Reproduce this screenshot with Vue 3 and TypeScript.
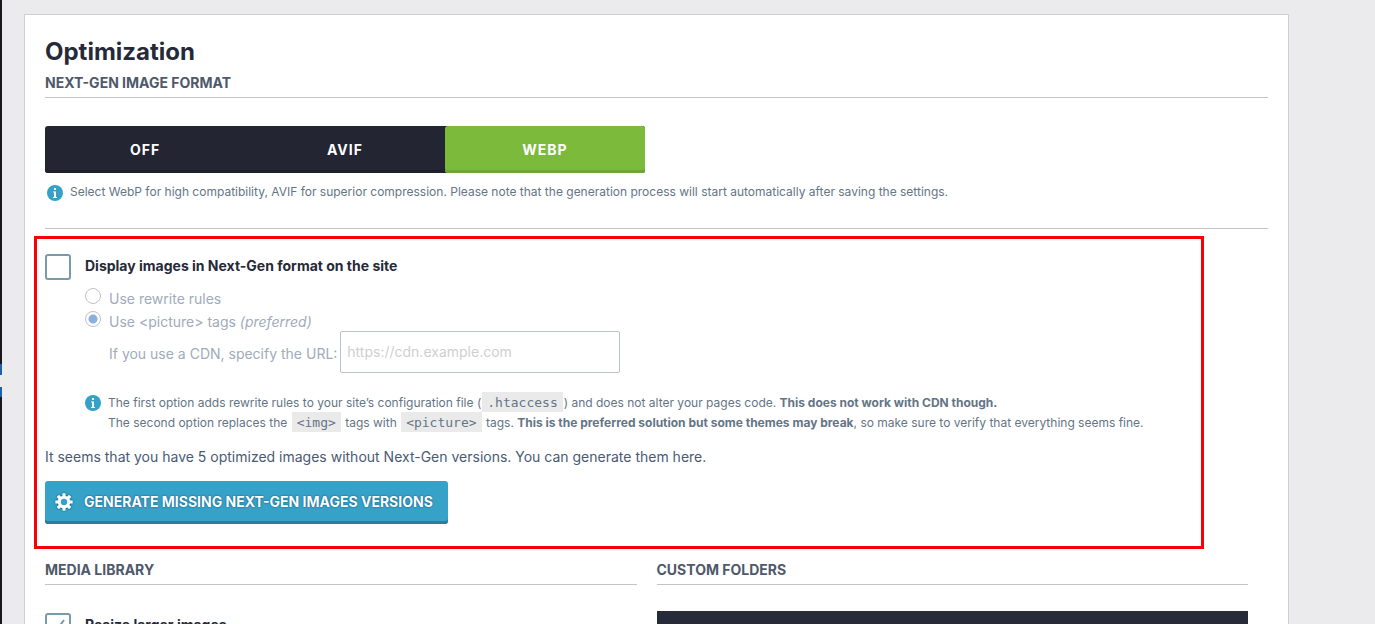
<script setup lang="ts">
import { ref } from 'vue'

const formats = ['Off', 'AVIF', 'WebP']
const format = ref('WebP')
const displayNextGen = ref(false)
const method = ref('picture')
const cdnUrl = ref('')
const resize = ref(true)
</script>

<template>
  <div class="page">
    <nav class="rail" aria-label="Admin menu">
      <a class="rail-current" href="#" aria-label="Settings"></a>
    </nav>
    <main class="card">
      <h1>Optimization</h1>

      <section>
        <h2>Next-Gen image format</h2>
        <div class="formats" role="radiogroup" aria-label="Next-Gen image format">
          <label v-for="name in formats" :key="name" class="format" :class="{ on: format === name }">
            <input v-model="format" type="radio" name="format" :value="name" />
            <span>{{ name }}</span>
          </label>
        </div>
        <div class="info format-info">
          <svg class="info-icon" viewBox="0 0 16 16" aria-hidden="true">
            <circle cx="8" cy="8" r="8" fill="#33a2c6" />
            <path d="M7 3h2v2H7zM6 6.500h3V12h1v1H6v-1h1V7.500H6z" fill="#fff" />
          </svg>
          <p>Select WebP for high compatibility, AVIF for superior compression. Please note that the generation process will start automatically after saving the settings.</p>
        </div>
      </section>

      <section class="delivery">
        <div class="check-row">
          <input id="nextgen" v-model="displayNextGen" class="check" type="checkbox" />
          <label for="nextgen">Display images in Next-Gen format on the site</label>
        </div>

        <div class="options">
          <label class="option">
            <input v-model="method" type="radio" name="method" value="rewrite" />
            <span>Use rewrite rules</span>
          </label>
          <label class="option">
            <input v-model="method" type="radio" name="method" value="picture" />
            <span>Use &lt;picture&gt; tags <em>(preferred)</em></span>
          </label>
          <div class="cdn">
            <label for="cdn">If you use a CDN, specify the URL:</label>
            <input id="cdn" v-model="cdnUrl" type="url" placeholder="https://cdn.example.com" />
          </div>
          <div class="info">
            <svg class="info-icon" viewBox="0 0 16 16" aria-hidden="true">
              <circle cx="8" cy="8" r="8" fill="#33a2c6" />
              <path d="M7 3h2v2H7zM6 6.500h3V12h1v1H6v-1h1V7.500H6z" fill="#fff" />
            </svg>
            <p>
              The first option adds rewrite rules to your site’s configuration file (<code>.htaccess</code>) and does not alter your pages code. <strong>This does not work with CDN though.</strong><br />
              The second option replaces the <code>&lt;img&gt;</code> tags with <code>&lt;picture&gt;</code> tags. <strong>This is the preferred solution but some themes may break</strong>, so make sure to verify that everything seems fine.
            </p>
          </div>
        </div>

        <p class="missing">It seems that you have 5 optimized images without Next-Gen versions. You can generate them here.</p>
        <button class="generate" type="button">
          <svg viewBox="0 0 18 18" aria-hidden="true">
            <g fill="#fff">
              <rect v-for="n in 4" :key="n" x="7.400" y="0.300" width="3.200" height="17.400" rx="0.600" :transform="`rotate(${n * 45} 9 9)`" />
              <circle cx="9" cy="9" r="6.300" />
            </g>
            <circle cx="9" cy="9" r="3.200" fill="#37a2c7" />
          </svg>
          <span>Generate missing Next-Gen images versions</span>
        </button>
        <div class="highlight"></div>
      </section>

      <div class="columns">
        <section>
          <h2>Media library</h2>
          <div class="check-row">
            <input id="resize" v-model="resize" class="check" type="checkbox" />
            <label for="resize">Resize larger images</label>
          </div>
        </section>
        <section>
          <h2>Custom folders</h2>
          <div class="folders"></div>
        </section>
      </div>
    </main>
  </div>
</template>

<style>
body {
  margin: 0;
  background: #ebebed;
}
</style>

<style scoped>
.page {
  display: flex;
  height: 100vh;
  overflow: hidden;
  box-sizing: border-box;
  background: #ebebed;
  font-family: Inter, "Liberation Sans", sans-serif;
  font-size: 14px;
  line-height: 20px;
  color: #4a5a75;
}

.rail {
  flex: none;
  width: 2px;
  padding-top: 364px;
  background: #15181d;
}

.rail-current {
  display: block;
  height: 33px;
  background: linear-gradient(#1f5fae 11px, #ebebed 11px 23px, #1f5fae 23px);
}

.card {
  flex: 1;
  align-self: flex-start;
  margin: 14px 86px 0 22px;
  padding: 20px;
  border: 1px solid #cfcfd3;
  background: #fff;
}

h1 {
  margin: 0 0 4px;
  font-size: 24px;
  line-height: 34px;
  font-weight: 700;
  color: #262a38;
}

h2 {
  margin: 0;
  padding-bottom: 4px;
  border-bottom: 1px solid #c3c4c7;
  font-size: 14px;
  line-height: 20px;
  font-weight: 700;
  text-transform: uppercase;
  color: #4f5969;
}

p {
  margin: 0;
}

.formats {
  display: flex;
  width: 600px;
  margin-top: 28px;
  border-radius: 3px;
  background: #242533;
  box-shadow: inset 0 -3px #1f202d;
}

.format {
  position: relative;
  flex: 1;
  height: 47px;
  border-radius: 3px;
  line-height: 48px;
  text-align: center;
  text-transform: uppercase;
  font-weight: 700;
  letter-spacing: 1px;
  color: #fff;
}

.format input {
  position: absolute;
  inset: 0;
  margin: 0;
  opacity: 0;
}

.format.on {
  background: #7cba3c;
  box-shadow: inset 0 -3px #6fa735;
}

.info {
  display: flex;
  gap: 7px;
  font-size: 12px;
  color: #647585;
}

.info-icon {
  flex: none;
  width: 16px;
  height: 16px;
  margin-top: 2px;
}

.format-info {
  padding: 9px 2px 26px;
  border-bottom: 1px solid #c3c4c7;
}

.format-info .info-icon {
  margin-top: 3px;
}

.delivery {
  position: relative;
  padding: 25px 0 36px;
}

.highlight {
  position: absolute;
  inset: 7px 64px 11px -11px;
  border: 3px solid #f80008;
  pointer-events: none;
}

.check-row {
  display: flex;
  gap: 14px;
  font-weight: 700;
  line-height: 24px;
  color: #262a38;
}

.check {
  appearance: none;
  flex: none;
  width: 26px;
  height: 26px;
  margin: 0;
  border: 2px solid #7a99ab;
  border-radius: 3px;
  background: #fff;
}

.check:checked {
  background: url("data:image/svg+xml,%3Csvg xmlns='http://www.w3.org/2000/svg' viewBox='0 0 22 22'%3E%3Cpath d='M5 12l4 4 8-11' fill='none' stroke='%237a99ab' stroke-width='2'/%3E%3C/svg%3E") no-repeat center;
}

.options {
  padding: 6px 0 0 40px;
}

.option {
  display: flex;
  gap: 8px;
  height: 23px;
  color: #a0abbb;
}

.option span {
  padding-top: 3px;
}

.option input {
  appearance: none;
  flex: none;
  width: 16px;
  height: 16px;
  margin: 2px 0 0;
  border: 1px solid #c0c2c7;
  border-radius: 50%;
  background: #fff;
}

.option input:checked {
  background: radial-gradient(circle, #8cb0dc 4px, #fff 5px);
}

.cdn {
  display: flex;
  align-items: center;
  gap: 3px;
  padding: 0 0 20px 24px;
  margin-top: -1px;
  color: #a0abbb;
}

.cdn label {
  padding-top: 4px;
}

.cdn input {
  box-sizing: border-box;
  width: 280px;
  height: 42px;
  padding: 0 6px 2px;
  border: 1px solid #b6c6d1;
  border-radius: 2px;
  background: #fff;
  font: inherit;
}

.cdn input::placeholder {
  color: #cfcfcf;
  opacity: 1;
}

code {
  margin: 0 1px;
  padding: 3px 5px 2px;
  background: #eaeaeb;
  font-family: "DejaVu Sans Mono", monospace;
  font-size: 13px;
  line-height: 16px;
}

.missing {
  margin: 14px 0;
}

.generate {
  display: flex;
  align-items: center;
  gap: 11px;
  height: 43px;
  padding: 0 15px 2px 10px;
  border: 0;
  border-radius: 3px;
  background: #37a2c7;
  box-shadow: inset 0 -3px #2c7d98;
  color: #fff;
  font: inherit;
  font-weight: 700;
  text-transform: uppercase;
  text-shadow: 0 0 2px #004b7a;
}

.generate svg {
  width: 18px;
  height: 18px;
  filter: drop-shadow(0 0 1px #00628a);
}

.columns {
  display: grid;
  grid-template-columns: 1fr 1fr;
  gap: 20px;
  padding-right: 20px;
}

.columns .check-row {
  margin-top: 28px;
}

.folders {
  height: 60px;
  margin-top: 26px;
  background: #272a38;
}
</style>
